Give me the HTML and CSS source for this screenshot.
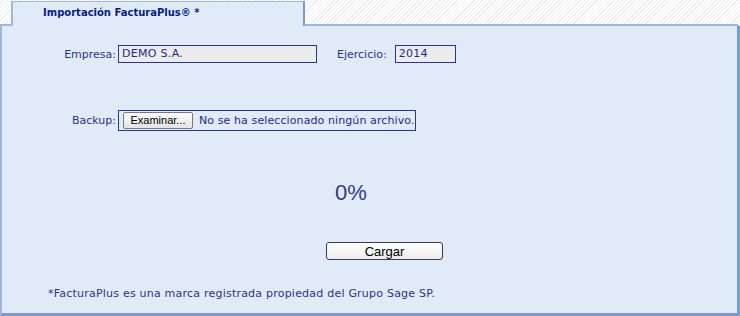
FILE: index.html
```html
<!DOCTYPE html>
<html lang="es">
<head>
<meta charset="utf-8">
<title>Importación FacturaPlus</title>
<link rel="stylesheet" href="styles.css">
</head>
<body>
<div class="frame">
  <div class="tabbar">
    <div class="edge-left"></div>
    <div class="tab">Importación FacturaPlus® *</div>
    <div class="edge-right"></div>
  </div>
  <div class="panel">
    <div class="row row-empresa">
      <label class="lbl">Empresa:</label>
      <div class="field field-empresa">DEMO S.A.</div>
      <label class="lbl lbl-ejercicio">Ejercicio:</label>
      <div class="field field-ejercicio">2014</div>
    </div>
    <div class="row row-backup">
      <label class="lbl">Backup:</label>
      <div class="filebox">
        <span class="btn-browse">Examinar...</span>
        <span class="nofile">No se ha seleccionado ningún archivo.</span>
      </div>
    </div>
    <div class="progress">0%</div>
    <div class="actions"><span class="btn-load">Cargar</span></div>
    <p class="note">*FacturaPlus es una marca registrada propiedad del Grupo Sage SP.</p>
  </div>
</div>
</body>
</html>
```
FILE: styles.css
```css
html, body {
  margin: 0;
  padding: 0;
}
body {
  width: 740px;
  height: 316px;
  overflow: hidden;
  font-family: "DejaVu Sans", Verdana, sans-serif;
  background: repeating-linear-gradient(135deg, #ffffff 0, #ffffff 2px, #ececec 2px, #ececec 3px);
}
.frame {
  display: flex;
  flex-direction: column;
  height: 316px;
}
.tabbar {
  display: flex;
  height: 26px;
  flex: none;
}
.edge-left {
  width: 11px;
  box-sizing: border-box;
  border-bottom: 2px solid #9fb6df;
}
.edge-right {
  flex: 1;
  box-sizing: border-box;
  border-bottom: 2px solid #9fb6df;
  border-right: 3px solid transparent;
}
.tab {
  width: 294px;
  box-sizing: border-box;
  margin-top: 1px;
  background: #e1ebf7;
  border-top: 1px solid #9fb6df;
  border-left: 2px solid #9fb6df;
  border-right: 2px solid #7e99cc;
  color: #0c1a86;
  font-weight: bold;
  font-size: 10px;
  padding: 5px 0 0 30px;
  line-height: 12px;
}
.panel {
  flex: 1;
  background: #e1ebf7;
  border-left: 2px solid #9fb6df;
  border-right: 3px solid #7e99cc;
  border-bottom: 3px solid #7e99cc;
  box-sizing: border-box;
  color: #2b348a;
  font-size: 11px;
  display: flex;
  flex-direction: column;
}
.row {
  display: flex;
  align-items: center;
}
.row-empresa {
  margin-top: 19px;
}
.lbl {
  width: 114px;
  text-align: right;
  margin-right: 2px;
}
.lbl-ejercicio {
  width: auto;
  margin-left: 20px;
  margin-right: 8px;
}
.field {
  height: 18px;
  box-sizing: border-box;
  border: 1px solid #29358f;
  background: #ececec;
  color: #1c2a8c;
  line-height: 16px;
  padding-left: 3px;
  letter-spacing: 0.3px;
}
.field-empresa { width: 199px; }
.field-ejercicio { width: 61px; }
.row-backup {
  margin-top: 47px;
}
.filebox {
  display: flex;
  align-items: center;
  width: 298px;
  height: 21px;
  box-sizing: border-box;
  border: 1px solid #29358f;
  padding-left: 4px;
  color: #1c2a8c;
  white-space: nowrap;
  overflow: hidden;
}
.nofile {
  letter-spacing: 0.1px;
}
.btn-browse {
  width: 70px;
  height: 17px;
  box-sizing: border-box;
  border: 1px solid #7a7a7a;
  border-radius: 2px;
  background: linear-gradient(#fbfbfb, #e4e4e4);
  color: #000;
  font-family: "Liberation Sans", Arial, sans-serif;
  font-size: 11px;
  text-align: center;
  line-height: 15px;
  margin-right: 6px;
}
.progress {
  margin-top: 50px;
  margin-left: 333px;
  font-family: "Liberation Sans", Arial, sans-serif;
  font-size: 22px;
  color: #2e3a8a;
  line-height: 24px;
}
.actions {
  margin-top: 37px;
  padding-left: 324px;
  display: flex;
}
.btn-load {
  width: 117px;
  height: 18px;
  box-sizing: border-box;
  border: 1px solid #3a3a4a;
  border-radius: 3px;
  background: linear-gradient(#ffffff, #ececec);
  color: #000;
  font-family: "Liberation Sans", Arial, sans-serif;
  font-size: 13px;
  text-align: center;
  line-height: 17px;
}
.note {
  margin: 27px 0 0 46px;
  font-size: 11px;
  letter-spacing: 0.22px;
  color: #2b348a;
}
```
